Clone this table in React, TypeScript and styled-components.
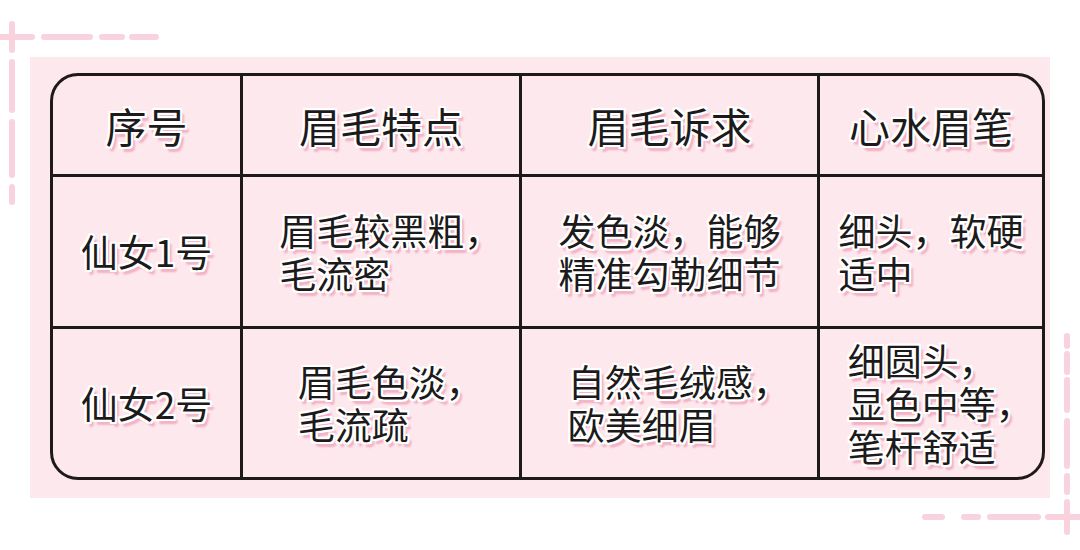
import styled, { createGlobalStyle } from "styled-components";

const GlobalStyle = createGlobalStyle`
  html, body {
    margin: 0;
    padding: 0;
    background: #ffffff;
  }
  body {
    font-family: "Noto Sans CJK SC", "Noto Sans", sans-serif;
    color: #1c1a1b;
  }
`;

const Page = styled.div`
  position: relative;
  width: 1080px;
  height: 550px;
  padding: 57px 0 0 30px;
  box-sizing: border-box;
  overflow: hidden;
`;

const Panel = styled.div`
  width: 1020px;
  height: 441px;
  background: #fde8ee;
  padding: 16px 5px 0 20px;
  box-sizing: border-box;
`;

const Grid = styled.div`
  display: grid;
  grid-template-columns: 190px 279px 298px 222px;
  grid-template-rows: 101px 152px 148px;
  width: 995px;
  height: 407px;
  box-sizing: border-box;
  border: 3px solid #1e1a1b;
  border-radius: 28px;
  overflow: hidden;
`;

const Cell = styled.div<{ $lastCol?: boolean; $lastRow?: boolean }>`
  display: flex;
  align-items: center;
  justify-content: center;
  box-sizing: border-box;
  border-right: ${(p) => (p.$lastCol ? "none" : "3px solid #1e1a1b")};
  border-bottom: ${(p) => (p.$lastRow ? "none" : "3px solid #1e1a1b")};
`;

const outline = `
  text-shadow:
    2px 0 0 #fff, -2px 0 0 #fff, 0 2px 0 #fff, 0 -2px 0 #fff,
    2px 2px 0 #fff, -2px -2px 0 #fff, 2px -2px 0 #fff, -2px 2px 0 #fff,
    4px 4px 2px #f2b3c5, 3px 5px 2px #f2b3c5;
`;

const HeadText = styled.span`
  font-size: 41px;
  font-weight: 400;
  line-height: 1;
  ${outline}
`;

const BodyText = styled.div<{ $center?: boolean }>`
  font-size: 37px;
  font-weight: 400;
  line-height: 43px;
  white-space: nowrap;
  text-align: ${(p) => (p.$center ? "center" : "left")};
  ${outline}
`;

// trailing full-width comma only takes half its box in the reference
const Tail = styled.span`
  margin-right: -0.5em;
`;

const Corner = styled.svg<{ $where: "tl" | "br" }>`
  position: absolute;
  ${(p) => (p.$where === "tl" ? "left: 0; top: 0;" : "right: 0; bottom: 0;")}
`;

const headers = ["序号", "眉毛特点", "眉毛诉求", "心水眉笔"];

const rows: string[][][] = [
  [["仙女1号"], ["眉毛较黑粗，", "毛流密"], ["发色淡，能够", "精准勾勒细节"], ["细头，软硬", "适中"]],
  [["仙女2号"], ["眉毛色淡，", "毛流疏"], ["自然毛绒感，", "欧美细眉"], ["细圆头，", "显色中等，", "笔杆舒适"]],
];

const dash = { stroke: "#f9d2dd", strokeWidth: 6, strokeLinecap: "round" as const };

const Line = ({ text }: { text: string }) =>
  text.endsWith("，") ? (
    <div>
      {text.slice(0, -1)}
      <Tail>，</Tail>
    </div>
  ) : (
    <div>{text}</div>
  );

const App = () => {
  return (
    <>
      <GlobalStyle />
      <Page>
        <Corner $where="tl" width="170" height="210" viewBox="0 0 170 210">
          <line x1="0" y1="37" x2="32" y2="37" {...dash} />
          <line x1="44" y1="37" x2="90" y2="37" {...dash} />
          <line x1="102" y1="37" x2="122" y2="37" {...dash} />
          <line x1="132" y1="37" x2="156" y2="37" {...dash} />
          <line x1="12" y1="24" x2="12" y2="50" {...dash} />
          <line x1="12" y1="62" x2="12" y2="110" {...dash} />
          <line x1="12" y1="122" x2="12" y2="175" {...dash} />
          <line x1="12" y1="187" x2="12" y2="202" {...dash} />
        </Corner>
        <Corner $where="br" width="170" height="220" viewBox="0 0 170 220">
          <line x1="15" y1="187" x2="32" y2="187" {...dash} />
          <line x1="54" y1="187" x2="68" y2="187" {...dash} />
          <line x1="80" y1="187" x2="128" y2="187" {...dash} />
          <line x1="138" y1="187" x2="170" y2="187" {...dash} />
          <line x1="157" y1="6" x2="157" y2="16" {...dash} />
          <line x1="157" y1="24" x2="157" y2="42" {...dash} />
          <line x1="157" y1="50" x2="157" y2="80" {...dash} />
          <line x1="157" y1="91" x2="157" y2="136" {...dash} />
          <line x1="157" y1="146" x2="157" y2="162" {...dash} />
          <line x1="157" y1="172" x2="157" y2="202" {...dash} />
        </Corner>
        <Panel>
          <Grid>
            {headers.map((h, i) => (
              <Cell key={h} $lastCol={i === 3}>
                <HeadText>{h}</HeadText>
              </Cell>
            ))}
            {rows.map((row, r) =>
              row.map((lines, c) => (
                <Cell key={`${r}-${c}`} $lastCol={c === 3} $lastRow={r === rows.length - 1}>
                  <BodyText $center={c === 0}>
                    {lines.map((l) => (
                      <Line key={l} text={l} />
                    ))}
                  </BodyText>
                </Cell>
              ))
            )}
          </Grid>
        </Panel>
      </Page>
    </>
  );
};

export default App;
